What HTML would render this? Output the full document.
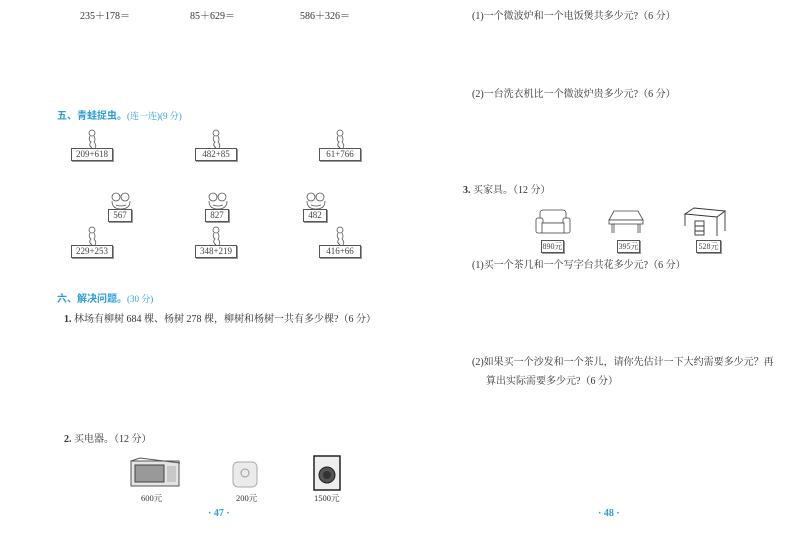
<!DOCTYPE html>
<html><head><meta charset="utf-8"><style>
body{margin:0;width:800px;height:535px;background:#fff;position:relative;overflow:hidden;font-family:"Liberation Serif","Noto Serif CJK SC",serif;color:#333;font-size:10px}
.t{position:absolute;white-space:nowrap;line-height:1}
.b{color:#2a9fd8;font-family:"Liberation Sans","Noto Sans CJK SC",sans-serif;font-weight:bold}
.bl{color:#2a9fd8}
.box{position:absolute;border:1px solid #555;box-shadow:1px 1px 0 #999;font-size:9px;text-align:center;line-height:11px;height:11px;color:#444;background:#fff}
svg{position:absolute}
</style></head><body>
<div class="t" style="left:80px;top:12px">235＋178＝</div>
<div class="t" style="left:190px;top:12px">85＋629＝</div>
<div class="t" style="left:300px;top:12px">586＋326＝</div>

<div class="t" style="left:57px;top:112px"><span class="b">五、青蛙捉虫。</span><span class="bl" style="font-size:9px">(连一连)(9 分)</span></div>

<svg style="left:86px;top:129px" width="12" height="20"><g fill="none" stroke="#555" stroke-width="0.8"><circle cx="6" cy="4" r="3"/><path d="M4 7 Q2 11 5 13 Q2 16 6 19 M8 7 Q10 11 8 13 Q11 16 9 19"/></g></svg>
<div class="box" style="left:71px;top:148px;width:40px">209+618</div>
<svg style="left:210px;top:129px" width="12" height="20"><g fill="none" stroke="#555" stroke-width="0.8"><circle cx="6" cy="4" r="3"/><path d="M4 7 Q2 11 5 13 Q2 16 6 19 M8 7 Q10 11 8 13 Q11 16 9 19"/></g></svg>
<div class="box" style="left:195px;top:148px;width:40px">482+85</div>
<svg style="left:334px;top:129px" width="12" height="20"><g fill="none" stroke="#555" stroke-width="0.8"><circle cx="6" cy="4" r="3"/><path d="M4 7 Q2 11 5 13 Q2 16 6 19 M8 7 Q10 11 8 13 Q11 16 9 19"/></g></svg>
<div class="box" style="left:319px;top:148px;width:40px">61+766</div>

<svg style="left:110px;top:192px" width="22" height="18"><g fill="none" stroke="#555" stroke-width="0.8"><circle cx="6" cy="5" r="4"/><circle cx="15" cy="5" r="4"/><path d="M2 9 Q2 17 11 17 Q20 17 20 9"/><path d="M6 13 Q11 15 16 13"/></g></svg>
<div class="box" style="left:108px;top:209px;width:22px">567</div>
<svg style="left:207px;top:192px" width="22" height="18"><g fill="none" stroke="#555" stroke-width="0.8"><circle cx="6" cy="5" r="4"/><circle cx="15" cy="5" r="4"/><path d="M2 9 Q2 17 11 17 Q20 17 20 9"/><path d="M6 13 Q11 15 16 13"/></g></svg>
<div class="box" style="left:205px;top:209px;width:22px">827</div>
<svg style="left:305px;top:192px" width="22" height="18"><g fill="none" stroke="#555" stroke-width="0.8"><circle cx="6" cy="5" r="4"/><circle cx="15" cy="5" r="4"/><path d="M2 9 Q2 17 11 17 Q20 17 20 9"/><path d="M6 13 Q11 15 16 13"/></g></svg>
<div class="box" style="left:303px;top:209px;width:22px">482</div>

<svg style="left:86px;top:226px" width="12" height="20"><g fill="none" stroke="#555" stroke-width="0.8"><circle cx="6" cy="4" r="3"/><path d="M4 7 Q2 11 5 13 Q2 16 6 19 M8 7 Q10 11 8 13 Q11 16 9 19"/></g></svg>
<div class="box" style="left:71px;top:245px;width:40px">229+253</div>
<svg style="left:210px;top:226px" width="12" height="20"><g fill="none" stroke="#555" stroke-width="0.8"><circle cx="6" cy="4" r="3"/><path d="M4 7 Q2 11 5 13 Q2 16 6 19 M8 7 Q10 11 8 13 Q11 16 9 19"/></g></svg>
<div class="box" style="left:195px;top:245px;width:40px">348+219</div>
<svg style="left:334px;top:226px" width="12" height="20"><g fill="none" stroke="#555" stroke-width="0.8"><circle cx="6" cy="4" r="3"/><path d="M4 7 Q2 11 5 13 Q2 16 6 19 M8 7 Q10 11 8 13 Q11 16 9 19"/></g></svg>
<div class="box" style="left:319px;top:245px;width:40px">416+66</div>

<div class="t" style="left:57px;top:295px"><span class="b">六、解决问题。</span><span class="bl" style="font-size:9px">(30 分)</span></div>
<div class="t" style="left:64px;top:315px"><b>1.</b> 林场有柳树 684 棵、杨树 278 棵，柳树和杨树一共有多少棵?（6 分）</div>
<div class="t" style="left:64px;top:435px"><b>2.</b> 买电器。（12 分）</div>

<svg style="left:130px;top:457px" width="52" height="30"><rect x="1" y="4" width="48" height="25" fill="#e4e4e4" stroke="#555"/><path d="M1 4 L10 1 L50 6" fill="none" stroke="#555"/><rect x="5" y="8" width="29" height="17" fill="#999" stroke="#444"/><rect x="37" y="9" width="9" height="16" fill="#c8c8c8"/></svg>
<svg style="left:232px;top:459px" width="26" height="29"><rect x="1" y="3" width="24" height="25" rx="5" fill="#ebebeb" stroke="#aaa"/><circle cx="13" cy="14" r="4" fill="none" stroke="#999"/></svg>
<svg style="left:313px;top:455px" width="28" height="36"><rect x="1" y="1" width="26" height="34" fill="#eee" stroke="#222" stroke-width="1.5"/><circle cx="14" cy="20" r="8" fill="#555" stroke="#222"/><circle cx="14" cy="20" r="4" fill="#333"/></svg>
<div class="t" style="left:141px;top:494px;font-size:8.5px">600元</div>
<div class="t" style="left:236px;top:494px;font-size:8.5px">200元</div>
<div class="t" style="left:314px;top:494px;font-size:8.5px">1500元</div>
<div class="t bl" style="left:208px;top:509px;font-size:10px;font-weight:bold">· 47 ·</div>

<div class="t" style="left:472px;top:12px">(1)一个微波炉和一个电饭煲共多少元?（6 分）</div>
<div class="t" style="left:472px;top:90px">(2)一台洗衣机比一个微波炉贵多少元?（6 分）</div>
<div class="t" style="left:463px;top:186px"><b>3.</b> 买家具。（12 分）</div>

<svg style="left:535px;top:208px" width="36" height="27"><g fill="#fff" stroke="#444" stroke-width="0.8"><rect x="5" y="2" width="26" height="13" rx="3"/><rect x="1" y="10" width="7" height="15" rx="2"/><rect x="28" y="10" width="7" height="15" rx="2"/><rect x="7" y="15" width="22" height="10"/></g></svg>
<svg style="left:608px;top:210px" width="36" height="24"><g fill="#fff" stroke="#444" stroke-width="0.8"><path d="M6 1 L30 1 L35 10 L1 10 Z"/><rect x="1" y="10" width="34" height="4"/><path d="M4 14 V23 M6 14 V23 M30 14 V23 M32 14 V23"/></g></svg>
<svg style="left:684px;top:207px" width="42" height="30"><g fill="#fff" stroke="#333" stroke-width="0.9"><path d="M1 7 L10 1 L41 4 L33 10 Z"/><path d="M1 7 V19 M33 10 V29 M41 4 V24"/><rect x="11" y="14" width="9" height="14"/><path d="M11 19 H20 M11 24 H20"/></g></svg>
<div class="box" style="left:541px;top:240px;width:21px;font-size:8px">890元</div>
<div class="box" style="left:617px;top:240px;width:21px;font-size:8px">395元</div>
<div class="box" style="left:696px;top:240px;width:23px;font-size:8px">528元</div>
<div class="t" style="left:472px;top:261px">(1)买一个茶几和一个写字台共花多少元?（6 分）</div>
<div class="t" style="left:472px;top:358px">(2)如果买一个沙发和一个茶儿，请你先估计一下大约需要多少元？再</div>
<div class="t" style="left:486px;top:377px">算出实际需要多少元?（6 分）</div>
<div class="t bl" style="left:598px;top:509px;font-size:10px;font-weight:bold">· 48 ·</div>
</body></html>
